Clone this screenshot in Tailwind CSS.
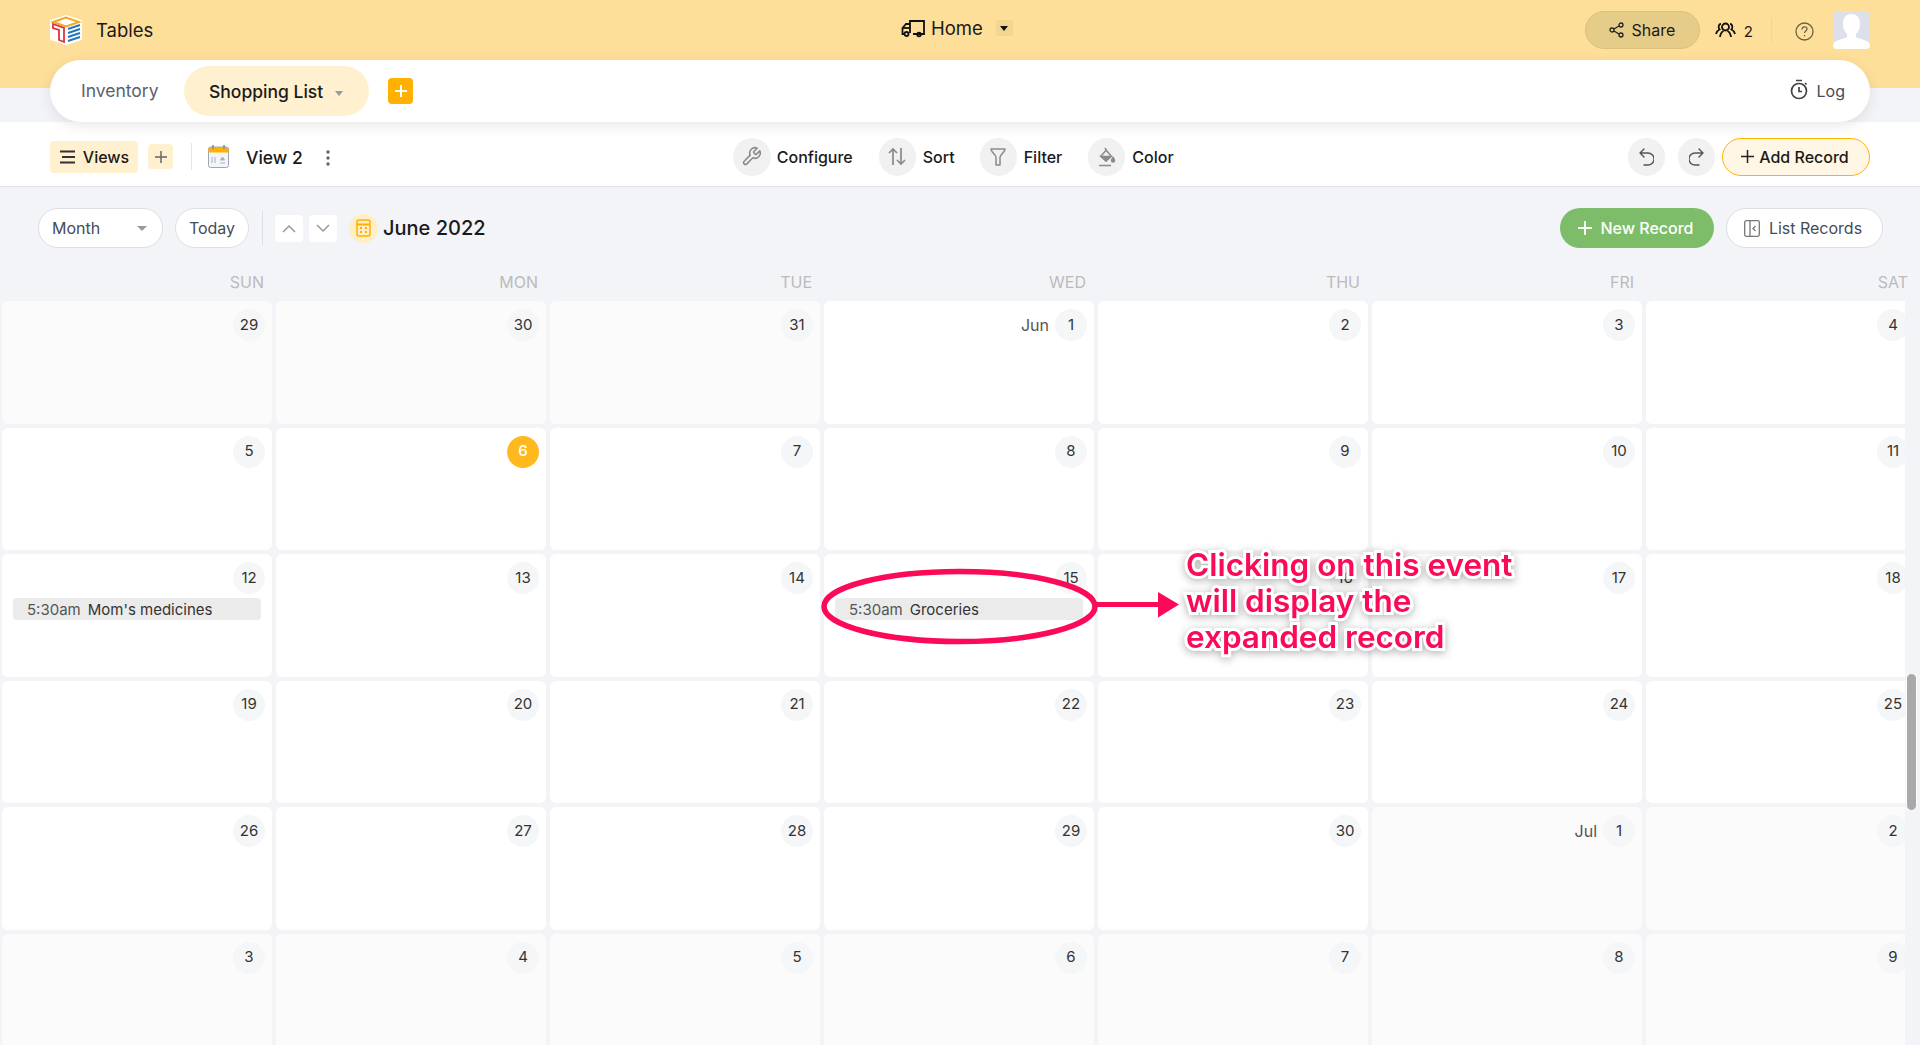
<!DOCTYPE html>
<html lang="en">
<head>
  <meta charset="UTF-8">
  <title>Tables - Shopping List</title>
  <script src="https://cdn.jsdelivr.net/npm/@tailwindcss/browser@4"></script>
</head>
<body class="bg-[#f3f4f8] h-screen overflow-hidden relative font-['Inter',sans-serif] text-[#1a1a1a]">

  <!-- top bar -->
  <header class="bg-[#fddf99] h-[88px] flex items-start pl-[50px] pr-[50px]">
    <div class="flex items-center h-[60px] w-[660px]">
      <svg class="w-[33px] h-[30px] mt-[-1px]" viewBox="0 0 33 30">
        <path d="M16 1 31 6v18l-15 5-15-5V6z" fill="#fff" stroke="#fff" stroke-width="2"/>
        <path d="M3 7 16 2.500 29 7 16 11.500z" fill="none" stroke="#f5a623" stroke-width="2"/>
        <path d="M3 9l11 4v14l-5-2V15l-6-2z" fill="#fff" stroke="#e0323c" stroke-width="1.800"/>
        <path d="M18 14l12-4M18 18l12-4M18 22l12-4M18 26l12-4" stroke="#2277bb" stroke-width="2"/>
      </svg>
      <span class="ml-[13px] mt-[1px] text-[18.500px]">Tables</span>
    </div>
    <div class="flex items-center h-[58px] ml-[191px]">
      <svg class="w-[24px] h-[20px] mt-[-2px]" viewBox="0 0 24 20" fill="none" stroke="#111" stroke-width="1.800">
        <path d="M9 15V3h14v13H12M9 6H5L1.500 10v6H3"/><circle cx="5.500" cy="16" r="2"/><circle cx="18" cy="16.500" r="1.800"/><path d="M2 10h7"/>
      </svg>
      <span class="ml-[6px] text-[18.500px]">Home</span>
      <span class="ml-[13px] w-[17px] h-[16px] rounded-[3px] bg-[#f2d68f] flex items-center justify-center mt-[-2px]">
        <span class="w-0 h-0 border-x-[4px] border-x-transparent border-t-[5px] border-t-[#111]"></span>
      </span>
    </div>
    <div class="ml-auto flex items-center mt-[11px]">
      <button class="w-[115px] h-[38px] rounded-full bg-[#e5cc88] border border-[#dcc27f] flex items-center justify-center gap-[7px] text-[16px]">
        <svg class="w-[15px] h-[16px]" viewBox="0 0 15 16" fill="none" stroke="#222" stroke-width="1.300">
          <circle cx="3" cy="8" r="2"/><circle cx="12" cy="3" r="2"/><circle cx="12" cy="13" r="2"/><path d="M5 7l5-3M5 9l5 3"/>
        </svg>
        Share
      </button>
      <svg class="ml-[15px] w-[21px] h-[16px] mt-[-1px]" viewBox="0 0 21 16" fill="none" stroke="#111" stroke-width="1.800">
        <circle cx="10.500" cy="5" r="3.500"/><path d="M5 15c.5-4 2.500-5.500 3.500-6M16 15c-.5-4-2.500-5.500-3.500-6"/><path d="M6 2C3.500 2 3 6 4.500 7.500 2.500 8.500 1.500 10 1 12M15 2c2.500 0 3 4 1.500 5.500 2 1 3 2.500 3.500 4.500"/>
      </svg>
      <span class="ml-[8px] text-[15px] mt-[4px]">2</span>
      <span class="ml-[18px] w-px h-[24px] bg-[#f2d68f]"></span>
      <svg class="ml-[23px] w-[19px] h-[19px] mt-[3px]" viewBox="0 0 19 19" fill="none" stroke="#6b6048" stroke-width="1.300">
        <circle cx="9.500" cy="9.500" r="8.500"/><path d="M7 7.500c0-3.500 5-3.500 5 -.5 0 2-2.500 2-2.500 4"/><path d="M9.500 13v1.300"/>
      </svg>
      <div class="ml-[19px] w-[37px] h-[38px] rounded-[4px] bg-[#dde0ea] overflow-hidden">
        <svg class="w-[37px] h-[38px]" viewBox="0 0 37 38" fill="#fff">
          <path d="M18.500 3c5.500 0 8.500 4 8.500 10 0 5-2 8-4 10v3c2 2 14 3 14 8v4H0v-4c0-5 12-6 14-8v-3c-2-2-4-5-4-10 0-6 3-10 8.500-10z"/>
        </svg>
      </div>
    </div>
  </header>

  <!-- sheet tabs -->
  <div class="relative mt-[-28px] mx-[50px] h-[62px] rounded-full bg-white shadow-[0_4px_14px_rgba(0,0,0,0.09)] flex items-center pl-[31px] pr-[25px]">
    <span class="text-[17.500px] text-[#5a6270] w-[103px] mt-[1px]">Inventory</span>
    <div class="w-[185px] h-[50px] rounded-full bg-[#fff0cf] flex items-center pl-[25px] pt-[2px] text-[17.500px] font-medium">
      Shopping List
      <span class="ml-[12px] mt-[2px] w-0 h-0 border-x-[4px] border-x-transparent border-t-[5px] border-t-[#999]"></span>
    </div>
    <button class="ml-[19px] w-[25px] h-[26px] rounded-[4px] bg-[#ffb000] flex items-center justify-center">
      <svg class="w-[14px] h-[14px]" viewBox="0 0 14 14" stroke="#fff" stroke-width="2"><path d="M7 1v12M1 7h12"/></svg>
    </button>
    <div class="ml-auto flex items-center gap-[9px] text-[#444c58] text-[16px]">
      <svg class="w-[18px] h-[21px] mt-[-3px]" viewBox="0 0 18 21" fill="none" stroke="#444" stroke-width="1.700">
        <circle cx="9" cy="12" r="7.500"/><path d="M9 8v4.500h3M6 1.500h6M15 4l1.500 1.500"/>
      </svg>
      Log
    </div>
  </div>

  <!-- view toolbar -->
  <div class="h-[65px] bg-white border-b border-[#e3e4e6] flex items-center pl-[50px] pr-[50px] pt-[5px]">
    <button class="w-[88px] h-[32px] rounded-[4px] bg-[#fff0cf] flex items-center justify-center gap-[7px] text-[16px] font-medium">
      <svg class="w-[17px] h-[14px]" viewBox="0 0 17 14" stroke="#333" stroke-width="1.800"><path d="M1 1.500h15M3 7h13M1 12.500h15"/></svg>
      Views
    </button>
    <button class="ml-[10px] w-[25px] h-[25px] rounded-[4px] bg-[#fff0cf] flex items-center justify-center">
      <svg class="w-[12px] h-[12px]" viewBox="0 0 12 12" stroke="#666" stroke-width="1.500"><path d="M6 0v12M0 6h12"/></svg>
    </button>
    <span class="ml-[18px] w-px h-[27px] bg-[#e5e5e5]"></span>
    <svg class="ml-[16px] w-[21px] h-[23px]" viewBox="0 0 21 23">
      <rect x=".5" y="2" width="20" height="20.500" rx="2" fill="#f4f5f8" stroke="#9aa6b8"/>
      <path d="M.5 4a2 2 0 0 1 2-2h16a2 2 0 0 1 2 2v3.500H.5z" fill="#ffb000"/>
      <path d="M5 0v4M16 0v4" stroke="#7c8898" stroke-width="1.500"/>
      <path d="M4 12v6M7 12v6M12 18h5M14.500 12l2 3h-4z" stroke="#aab2c0" fill="#aab2c0"/>
    </svg>
    <span class="ml-[17px] text-[17.500px] font-medium mt-[3px]">View 2</span>
    <svg class="ml-[23px] w-[4px] h-[16px] mt-[2px]" viewBox="0 0 4 16" fill="#666"><circle cx="2" cy="2" r="1.700"/><circle cx="2" cy="8" r="1.700"/><circle cx="2" cy="14" r="1.700"/></svg>

    <div class="ml-[403px] flex items-center text-[16px] font-medium">
      <span class="w-[38px] h-[38px] rounded-full bg-[#f1f1f1] flex items-center justify-center">
        <svg class="w-[21px] h-[21px]" viewBox="0 0 24 24" fill="none" stroke="#8a8a8a" stroke-width="1.800" stroke-linecap="round" stroke-linejoin="round">
          <path d="M14.700 6.300a1 1 0 0 0 0 1.400l1.600 1.600a1 1 0 0 0 1.400 0l3.770-3.770a6 6 0 0 1-7.940 7.940l-6.910 6.910a2.120 2.120 0 0 1-3-3l6.910-6.910a6 6 0 0 1 7.940-7.940l-3.760 3.760z"/>
        </svg>
      </span>
      <span class="ml-[6px]">Configure</span>
      <span class="ml-[26px] w-[37px] h-[38px] rounded-full bg-[#f1f1f1] flex items-center justify-center">
        <svg class="w-[18px] h-[19px]" viewBox="0 0 18 19" fill="none" stroke="#8a8a8a" stroke-width="1.700"><path d="M5 18V2M1 6l4-4 4 4M13 1v16M9 13l4 4 4-4"/></svg>
      </span>
      <span class="ml-[7px]">Sort</span>
      <span class="ml-[25px] w-[37px] h-[38px] rounded-full bg-[#f1f1f1] flex items-center justify-center">
        <svg class="w-[16px] h-[18px]" viewBox="0 0 16 18" fill="none" stroke="#8a8a8a" stroke-width="1.500" stroke-linejoin="round"><path d="M1 1h14c0 3-5 6-5 8v8H6V9C6 7 1 4 1 1z"/></svg>
      </span>
      <span class="ml-[7px]">Filter</span>
      <span class="ml-[26px] w-[37px] h-[38px] rounded-full bg-[#f1f1f1] flex items-center justify-center">
        <svg class="w-[18px] h-[20px]" viewBox="0 0 18 20" fill="none" stroke="#8a8a8a" stroke-width="1.500">
          <path d="M7 1l1.500 2.500L13 9l-5 5-5-5 5-5.500"/><path d="M3 9.500h10L8 14z" fill="#8a8a8a"/><path d="M1 18.500h12"/><path d="M15 10.500c1 1.500 1.500 2 1.500 3a1.500 1.500 0 0 1-3 0c0-1 .5-1.500 1.500-3z" fill="#8a8a8a"/>
        </svg>
      </span>
      <span class="ml-[7px]">Color</span>
    </div>

    <div class="ml-auto flex items-center">
      <span class="w-[37px] h-[38px] rounded-full bg-[#f1f1f1] flex items-center justify-center">
        <svg class="w-[15px] h-[18px]" viewBox="0 0 15 18" fill="none" stroke="#555" stroke-width="1.400" stroke-linecap="round" stroke-linejoin="round"><path d="M5 1 1 5l4 4M1 5h8a5 5 0 0 1 0 12H5"/></svg>
      </span>
      <span class="ml-[13px] w-[37px] h-[38px] rounded-full bg-[#f1f1f1] flex items-center justify-center">
        <svg class="w-[15px] h-[18px]" viewBox="0 0 15 18" fill="none" stroke="#555" stroke-width="1.400" stroke-linecap="round" stroke-linejoin="round"><path d="M10 1l4 4-4 4M14 5H6a5 5 0 0 0 0 12h4"/></svg>
      </span>
      <button class="ml-[7px] w-[148px] h-[38px] rounded-full bg-[#fff6e5] border border-[#ffb400] flex items-center justify-center gap-[5px] text-[16px] font-medium pr-[2px]">
        <svg class="w-[13px] h-[13px]" viewBox="0 0 13 13" stroke="#222" stroke-width="1.500"><path d="M6.500 0v13M0 6.500h13"/></svg>
        Add Record
      </button>
    </div>
  </div>

  <!-- calendar toolbar -->
  <div class="flex items-center h-[82px] pl-[38px] pr-[37px]">
    <div class="w-[125px] h-[40px] rounded-full bg-white border border-[#dedfe3] flex items-center justify-between pl-[13px] pr-[15px] text-[16px] text-[#444c58]">
      Month
      <span class="w-0 h-0 border-x-[5px] border-x-transparent border-t-[5px] border-t-[#999]"></span>
    </div>
    <button class="ml-[12px] w-[74px] h-[40px] rounded-full bg-white border border-[#dedfe3] text-[16px] text-[#444c58]">Today</button>
    <span class="ml-[13px] w-px h-[34px] bg-[#dedfe3]"></span>
    <button class="ml-[12px] w-[28px] h-[27px] rounded-[4px] bg-white flex items-center justify-center">
      <svg class="w-[14px] h-[9px]" viewBox="0 0 14 9" fill="none" stroke="#999" stroke-width="1.500"><path d="M1 8l6-6 6 6"/></svg>
    </button>
    <button class="ml-[6px] w-[28px] h-[27px] rounded-[4px] bg-white flex items-center justify-center">
      <svg class="w-[14px] h-[9px]" viewBox="0 0 14 9" fill="none" stroke="#999" stroke-width="1.500"><path d="M1 1l6 6 6-6"/></svg>
    </button>
    <span class="ml-[12px] w-[29px] h-[29px] rounded-full bg-[#ffeec6] flex items-center justify-center">
      <svg class="w-[15px] h-[18px]" viewBox="0 0 15 18" fill="none" stroke="#ffb000" stroke-width="1.500">
        <rect x="1" y="1" width="13" height="16" rx="2"/><path d="M1 5.500h13" stroke-width="2"/><path d="M4 9h2M9 9h2M4 13h2M9 13h2" stroke-width="2"/>
      </svg>
    </span>
    <span class="ml-[5px] text-[20px] font-medium">June 2022</span>
    <button class="ml-auto w-[154px] h-[40px] rounded-full bg-[#7dbd69] text-white flex items-center justify-center gap-[9px] text-[16px] font-medium pr-[3px]">
      <svg class="w-[14px] h-[14px]" viewBox="0 0 14 14" stroke="#fff" stroke-width="1.800"><path d="M7 0v14M0 7h14"/></svg>
      New Record
    </button>
    <button class="ml-[12px] w-[157px] h-[40px] rounded-full bg-white border border-[#dedfe3] flex items-center justify-center gap-[9px] text-[16px] text-[#444c58] pr-[3px]">
      <svg class="w-[16px] h-[17px]" viewBox="0 0 16 17" fill="none" stroke="#777" stroke-width="1.300"><rect x=".7" y=".7" width="14.600" height="15.600" rx="1.500"/><path d="M6 1v15"/><path d="M11.500 6l-2.500 2.500 2.500 2.500"/></svg>
      List Records
    </button>
  </div>

  <!-- weekday names -->
  <div class="grid grid-cols-[repeat(7,270px)] gap-x-[4px] pl-[2px] h-[32px] items-center text-right text-[16px] text-[#bbbbbb] pb-[6px]">
    <span class="pr-[8px]">SUN</span><span class="pr-[8px]">MON</span><span class="pr-[8px]">TUE</span><span class="pr-[8px]">WED</span><span class="pr-[8px]">THU</span><span class="pr-[8px]">FRI</span><span class="pr-[8px]">SAT</span>
  </div>

  <!-- month grid, filled in below -->
  <div id="grid" class="grid grid-cols-[repeat(7,270px)] auto-rows-[122.500px] gap-[4px] pl-[2px] w-[1905px] overflow-hidden h-[744px]"></div>

  <!-- scrollbar -->
  <div class="absolute right-[3px] top-[673px] w-[11px] h-[138px] rounded-full bg-[#a9a9a9] border border-white"></div>

  <!-- annotation over the screenshot -->
  <svg class="absolute left-[815px] top-[559px] w-[375px] h-[95px]" viewBox="0 0 375 95" fill="none">
    <ellipse cx="144.500" cy="47.500" rx="135.500" ry="35" stroke="#fb0a57" stroke-width="5.500"/>
    <path d="M282 45.500h62" stroke="#fb0a57" stroke-width="5"/>
    <path d="M343 33l21 12.500-21 13z" fill="#fb0a57"/>
  </svg>
  <div class="absolute left-[1186px] top-[547px] font-semibold text-[31.500px] leading-[36px] text-[#fb0a57] [-webkit-text-stroke:6px_white] [paint-order:stroke_fill] [filter:drop-shadow(0_2px_4px_rgba(0,0,0,0.3))]">
    Clicking on this event<br>will display the<br>expanded record
  </div>

  <script>
    // [day, prefix, in current month, today]
    const days = [
      [29],[30],[31],[1,'Jun',1],[2,'',1],[3,'',1],[4,'',1],
      [5,'',1],[6,'',1,1],[7,'',1],[8,'',1],[9,'',1],[10,'',1],[11,'',1],
      [12,'',1],[13,'',1],[14,'',1],[15,'',1],[16,'',1],[17,'',1],[18,'',1],
      [19,'',1],[20,'',1],[21,'',1],[22,'',1],[23,'',1],[24,'',1],[25,'',1],
      [26,'',1],[27,'',1],[28,'',1],[29,'',1],[30,'',1],[1,'Jul'],[2],
      [3],[4],[5],[6],[7],[8],[9]
    ];
    const events = { 14: "Mom's medicines", 17: 'Groceries' };
    document.getElementById('grid').innerHTML = days.map(([d, prefix, cur, today], i) => {
      const cell = cur ? 'bg-white' : 'bg-[#fbfbfb]';
      const circle = today ? 'bg-[#ffb91f] text-white font-medium' : 'bg-[#f5f6f8] text-[#333]';
      const ev = events[i] ? `<div class="absolute left-[11px] right-[11px] top-[44px] h-[22px] rounded-[4px] bg-[#ebebeb] pl-[14px] flex items-center text-[15px] leading-none"><span class="text-[#555] mr-[7px]">5:30am</span><span class="text-[#333]">${events[i]}</span></div>` : '';
      const pre = prefix ? `<span class="absolute right-[45px] top-[8px] h-[32px] flex items-center text-[16px] text-[#555]">${prefix}</span>` : '';
      return `<div class="relative rounded-[6px] ${cell}">${pre}<span class="absolute right-[7px] top-[8px] w-[32px] h-[32px] rounded-full flex items-center justify-center text-[15px] ${circle}">${d}</span>${ev}</div>`;
    }).join('');
  </script>
</body>
</html>
